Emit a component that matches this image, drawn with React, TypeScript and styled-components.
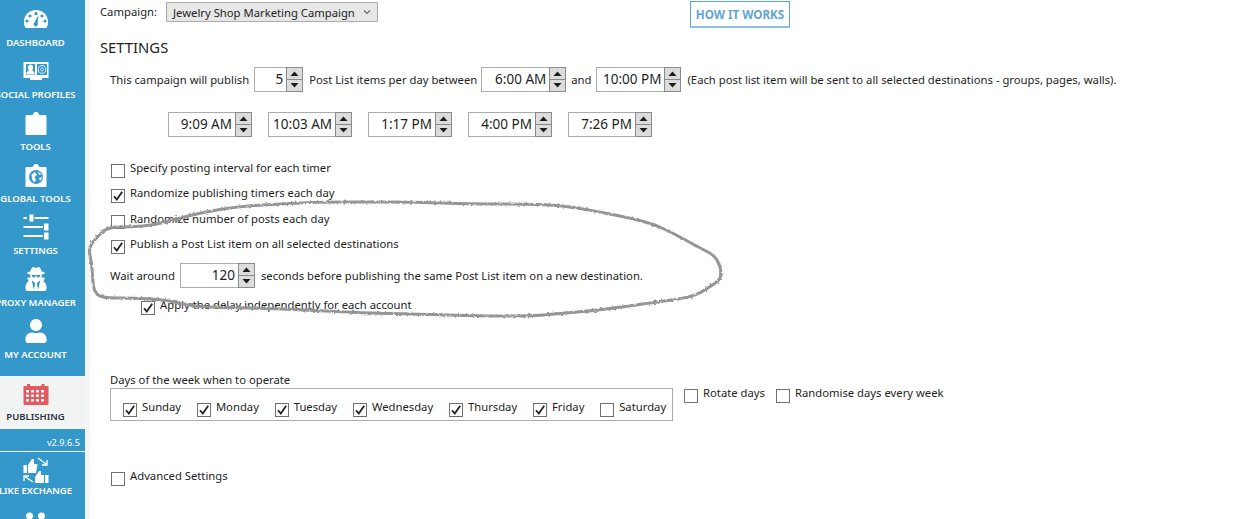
import React from 'react'
import styled, { createGlobalStyle } from 'styled-components'
import { FaUser, FaUserSecret } from 'react-icons/fa'

const Global = createGlobalStyle`
  html, body {
    margin: 0;
    height: 100%;
    background: #ffffff;
    overflow: hidden;
  }
  body {
    font-family: 'Noto Sans', 'Open Sans', sans-serif;
    font-size: 11.27px;
    color: #1e1e1e;
  }
`

const Shell = styled.div`
  position: relative;
  display: flex;
  width: 1248px;
  height: 519px;
  overflow: hidden;
`

const Sidebar = styled.nav`
  flex: none;
  width: 85px;
  height: 519px;
  overflow: hidden;
  background: #3598cb;
  color: #ffffff;
`

const NavItem = styled.div<{ $active?: boolean; $height?: number }>`
  display: flex;
  flex-direction: column;
  align-items: center;
  justify-content: flex-end;
  height: ${(p) => p.$height ?? 52}px;
  padding: 0 14px ${(p) => (p.$active ? 6 : 4)}px 0;
  box-sizing: border-box;
  background: ${(p) => (p.$active ? '#f2f4f4' : 'transparent')};
  color: ${(p) => (p.$active ? '#26323a' : '#ffffff')};
  overflow: hidden;
`

const HeadsItem = styled.div`
  display: flex;
  justify-content: center;
  height: 18px;
  padding: 9px 14px 0 0;
  box-sizing: border-box;
  overflow: hidden;
`

const Spacer = styled.div`
  height: 11px;
`

const NavLabel = styled.span`
  font-size: 9.5px;
  font-weight: 600;
  line-height: 13px;
  white-space: nowrap;
`

const NavIcon = styled.svg<{ $color?: string }>`
  display: block;
  flex: none;
  width: 28px;
  height: 28px;
  margin-bottom: 3px;
  overflow: visible;
  fill: ${(p) => p.$color ?? 'currentColor'};
`

const PackIcon = styled.span`
  display: flex;
  flex: none;
  align-items: center;
  justify-content: center;
  height: 28px;
  margin-bottom: 3px;
  font-size: 24px;
`

const Version = styled.div`
  height: 23px;
  box-sizing: border-box;
  padding: 7px 5px 0 0;
  font-size: 9.2px;
  line-height: 14px;
  text-align: right;
  border-bottom: 1px solid #ffffff;
`

const Gutter = styled.div`
  flex: none;
  width: 5px;
  background: #f4f6f6;
`

const Main = styled.main`
  flex: 1;
  padding-left: 10px;
`

const TopRow = styled.div`
  display: flex;
  align-items: flex-start;
  height: 39px;
`

const CampaignLabel = styled.span`
  width: 66px;
  line-height: 24px;
`

const Select = styled.div`
  display: flex;
  align-items: center;
  justify-content: space-between;
  width: 212px;
  height: 20px;
  margin-top: 2px;
  padding: 0 6px;
  box-sizing: border-box;
  background: #e7e7e7;
  border: 1px solid #acacac;
`

const HowItWorks = styled.div`
  width: 100px;
  height: 27px;
  margin: 1px 0 0 312px;
  box-sizing: border-box;
  border: 1px solid #5aa7d3;
  border-bottom: 2px solid #8cc2e0;
  color: #5ea6d0;
  font-size: 11.6px;
  font-weight: 700;
  line-height: 25px;
  text-align: center;
`

const Heading = styled.h2`
  margin: 0;
  height: 27px;
  font-size: 14.8px;
  font-weight: 400;
  line-height: 16px;
`

const PublishRow = styled.div`
  display: flex;
  align-items: center;
  height: 26px;
  padding-left: 10px;
  white-space: nowrap;
`

const Gap = styled.span<{ $w: number }>`
  display: inline-block;
  flex: none;
  width: ${(p) => p.$w}px;
`

const TimesRow = styled.div`
  display: flex;
  gap: 16px;
  height: 26px;
  margin-top: 20px;
  padding-left: 68px;
`

const SpinBox = styled.div<{ $w: number }>`
  display: flex;
  flex: none;
  width: ${(p) => p.$w}px;
  height: 25px;
  box-sizing: border-box;
  background: #ffffff;
  border: 1px solid #acacac;
`

const SpinValue = styled.span`
  flex: 1;
  padding-right: 3px;
  font-size: 13.5px;
  line-height: 22px;
  text-align: right;
  white-space: nowrap;
`

const SpinButtons = styled.div`
  display: flex;
  flex-direction: column;
  flex: none;
  width: 17px;
  margin: -1px -1px -1px 0;
  box-sizing: border-box;
  border: 1px solid #8a8a8a;
  background: #dcdcdc;
`

const SpinPart = styled.div`
  flex: 1;
  display: flex;
  align-items: center;
  justify-content: center;
  & + & {
    border-top: 1px solid #8a8a8a;
  }
`

const Options = styled.div`
  margin-top: 23px;
  padding-left: 10px;
`

const OptionRow = styled.div<{ $indent?: number }>`
  height: 25.4px;
  padding-left: ${(p) => p.$indent ?? 0}px;
`

const WaitRow = styled.div`
  display: flex;
  align-items: center;
  height: 26px;
  margin-bottom: 9px;
  white-space: nowrap;
`

const Check = styled.label`
  display: inline-flex;
  align-items: flex-start;
  white-space: nowrap;
  line-height: 14px;
`

const Box = styled.span`
  flex: none;
  display: flex;
  align-items: center;
  justify-content: center;
  width: 14px;
  height: 14px;
  margin: 3px 5px 0 1px;
  box-sizing: border-box;
  background: #ffffff;
  border: 1px solid #707070;
`

const DaysBlock = styled.div`
  margin-top: 49.6px;
  padding-left: 10px;
`

const DaysCaption = styled.div`
  height: 15px;
  line-height: 14px;
`

const DaysRow = styled.div`
  display: flex;
  align-items: flex-start;
`

const DaysFrame = styled.div`
  display: flex;
  width: 563px;
  height: 33px;
  box-sizing: border-box;
  padding: 11px 0 0 11px;
  border: 1px solid #acacac;
  gap: 14.8px;
`

const DaysExtras = styled.div`
  display: flex;
  gap: 10px;
  margin: -2px 0 0 10px;
`

const Advanced = styled.div`
  margin-top: 48px;
  padding-left: 10px;
`

const Scribble = styled.svg`
  position: absolute;
  inset: 0;
  pointer-events: none;
`

function CheckBox({ label, checked }: { label: string; checked?: boolean }) {
  return (
    <Check>
      <Box>
        {checked && (
          <svg width="12" height="12" viewBox="0 0 12 12">
            <path d="M2 6.2 L4.8 9.6 L10.2 1.8" fill="none" stroke="#222" strokeWidth="1.8" />
          </svg>
        )}
      </Box>
      {label}
    </Check>
  )
}

function Spin({ value, w }: { value: string; w: number }) {
  return (
    <SpinBox $w={w}>
      <SpinValue>{value}</SpinValue>
      <SpinButtons>
        <SpinPart>
          <svg width="9" height="5" viewBox="0 0 9 5">
            <path d="M0.5 5 L4.5 0.5 L8.5 5 Z" fill="#1c1c1c" />
          </svg>
        </SpinPart>
        <SpinPart>
          <svg width="9" height="5" viewBox="0 0 9 5">
            <path d="M0.5 0 L4.5 4.5 L8.5 0 Z" fill="#1c1c1c" />
          </svg>
        </SpinPart>
      </SpinButtons>
    </SpinBox>
  )
}

const times = ['9:09 AM', '10:03 AM', '1:17 PM', '4:00 PM', '7:26 PM']

const days = [
  { label: 'Sunday', checked: true },
  { label: 'Monday', checked: true },
  { label: 'Tuesday', checked: true },
  { label: 'Wednesday', checked: true },
  { label: 'Thursday', checked: true },
  { label: 'Friday', checked: true },
  { label: 'Saturday', checked: false },
]

// the hand-drawn loop somebody put over the screenshot
const loop: [number, number][] = [
  [108, 227], [130, 227], [155, 225], [180, 218], [205, 212], [235, 207], [262, 205], [315, 202],
  [365, 202], [415, 202], [467, 204], [520, 204], [560, 205], [600, 212], [630, 218], [657, 225],
  [680, 237], [700, 248], [714, 255], [720, 265], [721, 273], [720, 280], [708, 288], [693, 297],
  [650, 303], [600, 310], [565, 313], [533, 316], [480, 316], [415, 314], [362, 313], [310, 310],
  [252, 308], [195, 307], [168, 300], [135, 298], [100, 298], [94, 290], [93, 283], [91.7, 263],
  [88.3, 248], [97, 237],
]

function loopPath(points: [number, number][]) {
  const mid = (a: [number, number], b: [number, number]) => `${(a[0] + b[0]) / 2} ${(a[1] + b[1]) / 2}`
  let d = `M${mid(points[points.length - 1], points[0])}`
  points.forEach((p, i) => {
    d += ` Q${p[0]} ${p[1]} ${mid(p, points[(i + 1) % points.length])}`
  })
  return d
}

export default function App() {
  return (
    <Shell>
      <Global />
      <Sidebar>
        <NavItem $height={53}>
          <NavIcon viewBox="0 0 28 28">
            <path
              fillRule="evenodd"
              d="M14 5 C7 5 2 10 2 17 C2 19.5 2.6 21.5 3.6 23 L24.4 23 C25.4 21.5 26 19.5 26 17 C26 10 21 5 14 5 Z M14 7 a1.6 1.6 0 1 1 -.01 0 Z M8 9.4 a1.6 1.6 0 1 1 -.01 0 Z M20 9.4 a1.6 1.6 0 1 1 -.01 0 Z M5 14.4 a1.6 1.6 0 1 1 -.01 0 Z M23 14.4 a1.6 1.6 0 1 1 -.01 0 Z"
            />
            <path d="M16.5 10 L15.6 18 a2.2 2.2 0 1 1 -3 -.8 Z" fill="#3598cb" />
          </NavIcon>
          <NavLabel>DASHBOARD</NavLabel>
        </NavItem>
        <NavItem>
          <NavIcon viewBox="0 0 28 28">
            <path d="M1.5 5 H26.5 V21 H20 V23 H8 V21 H1.5 Z" />
            <path d="M4 7 H13 V18 H4 Z" fill="#3598cb" />
            <path d="M8.5 7.5 a2.6 2.6 0 0 1 2.6 3 c0 1.6 -.8 2.4 -.8 3.2 l2.2 1.6 V17.5 H4.5 V15.3 L6.7 13.7 c0 -.8 -.8 -1.6 -.8 -3.2 A2.6 2.6 0 0 1 8.5 7.5 Z" />
            <path d="M15 7 H25 V18 H15 Z" fill="#3598cb" />
            <circle cx="20" cy="12.5" r="3.8" fill="none" stroke="#bfe0f0" strokeWidth="1.2" />
            <circle cx="20" cy="12.5" r="1.4" fill="none" stroke="#bfe0f0" strokeWidth="1" />
          </NavIcon>
          <NavLabel>SOCIAL PROFILES</NavLabel>
        </NavItem>
        <NavItem>
          <NavIcon viewBox="0 0 28 28">
            <path d="M4.5 6 H10.5 L12.5 3 H15.5 L17.5 6 H23.5 a1 1 0 0 1 1 1 V25 a1 1 0 0 1 -1 1 H4.5 a1 1 0 0 1 -1 -1 V7 a1 1 0 0 1 1 -1 Z" />
          </NavIcon>
          <NavLabel>TOOLS</NavLabel>
        </NavItem>
        <NavItem>
          <NavIcon viewBox="0 0 28 28">
            <path d="M4.5 6 H10.5 L12.5 3 H15.5 L17.5 6 H23.5 a1 1 0 0 1 1 1 V25 a1 1 0 0 1 -1 1 H4.5 a1 1 0 0 1 -1 -1 V7 a1 1 0 0 1 1 -1 Z" />
            <circle cx="14" cy="16" r="7" fill="#3598cb" />
            <path d="M9.5 13.5 L13 11 L15 14 L12.5 16 L14 19 L12 21.5 L10 18 Z M16 10.5 L19.5 13 L17 14 Z M17 17 L20.5 16 L18 20 Z" />
          </NavIcon>
          <NavLabel>GLOBAL TOOLS</NavLabel>
        </NavItem>
        <NavItem>
          <NavIcon viewBox="0 0 28 28">
            <path d="M1.5 4 H5 V6 H1.5 Z M12.5 4 H26.5 V6 H12.5 Z M7.5 1.5 H11.5 V8.5 H7.5 Z M1.5 13 H21 V15 H1.5 Z M22 10.5 H26.5 V17.5 H22 Z M1.5 22 H21 V24 H1.5 Z M22 19.5 H26.5 V26.5 H22 Z" />
          </NavIcon>
          <NavLabel>SETTINGS</NavLabel>
        </NavItem>
        <NavItem>
          <PackIcon>
            <FaUserSecret />
          </PackIcon>
          <NavLabel>PROXY MANAGER</NavLabel>
        </NavItem>
        <NavItem>
          <PackIcon>
            <FaUser />
          </PackIcon>
          <NavLabel>MY ACCOUNT</NavLabel>
        </NavItem>
        <Spacer />
        <NavItem $active $height={53}>
          <NavIcon viewBox="0 0 28 28" $color="#e05a5f">
            <path
              fillRule="evenodd"
              d="M1.5 7 H5 V5 H8 V7 H19.5 V5 H22.5 V7 H26.5 V25 a1 1 0 0 1 -1 1 H2.5 a1 1 0 0 1 -1 -1 Z M4 11 V13.5 H7 V11 Z M9 11 V13.5 H12 V11 Z M14 11 V13.5 H17 V11 Z M19 11 V13.5 H22 V11 Z M4 15.5 V18 H7 V15.5 Z M9 15.5 V18 H12 V15.5 Z M14 15.5 V18 H17 V15.5 Z M19 15.5 V18 H22 V15.5 Z M4 20 V22.5 H7 V20 Z M9 20 V22.5 H12 V20 Z M14 20 V22.5 H17 V20 Z M19 20 V22.5 H22 V20 Z"
            />
          </NavIcon>
          <NavLabel>PUBLISHING</NavLabel>
        </NavItem>
        <Version>v2.9.6.5</Version>
        <NavItem $height={49}>
          <NavIcon viewBox="0 0 28 28">
            <path d="M1.5 12 H5 V20 H1.5 Z M6 12 L10 6 H12 V11 H15.5 L14 20 H6 Z" />
            <path d="M26.5 30 H23 V22 H26.5 Z M22 30 H13 V24 L17 18 H19 V22 H22 Z" />
            <path d="M16 5 L25 12 M25 7 V12 H20 M11 29 L2 23 M2 28 V23 H7" fill="none" stroke="currentColor" strokeWidth="1.3" />
          </NavIcon>
          <NavLabel>LIKE EXCHANGE</NavLabel>
        </NavItem>
        <HeadsItem>
          <NavIcon viewBox="0 0 28 28">
            <circle cx="7.5" cy="6" r="3.5" />
            <circle cx="19.5" cy="6" r="3.5" />
          </NavIcon>
        </HeadsItem>
      </Sidebar>
      <Gutter />
      <Main>
        <TopRow>
          <CampaignLabel>Campaign:</CampaignLabel>
          <Select>
            Jewelry Shop Marketing Campaign
            <svg width="8" height="5" viewBox="0 0 8 5">
              <path d="M1 0.5 L4 3.5 L7 0.5" fill="none" stroke="#666" strokeWidth="1.1" />
            </svg>
          </Select>
          <HowItWorks>HOW IT WORKS</HowItWorks>
        </TopRow>
        <Heading>SETTINGS</Heading>
        <PublishRow>
          This campaign will publish
          <Gap $w={5} />
          <Spin value="5" w={49} />
          <Gap $w={6} />
          Post List items per day between
          <Gap $w={4} />
          <Spin value="6:00 AM" w={85} />
          <Gap $w={5} />
          and
          <Gap $w={5} />
          <Spin value="10:00 PM" w={85} />
          <Gap $w={6} />
          (Each post list item will be sent to all selected destinations - groups, pages, walls).
        </PublishRow>
        <TimesRow>
          {times.map((t) => (
            <Spin key={t} value={t} w={84} />
          ))}
        </TimesRow>
        <Options>
          <OptionRow>
            <CheckBox label="Specify posting interval for each timer" />
          </OptionRow>
          <OptionRow>
            <CheckBox label="Randomize publishing timers each day" checked />
          </OptionRow>
          <OptionRow>
            <CheckBox label="Randomize number of posts each day" />
          </OptionRow>
          <OptionRow>
            <CheckBox label="Publish a Post List item on all selected destinations" checked />
          </OptionRow>
          <WaitRow>
            Wait around
            <Gap $w={5} />
            <Spin value="120" w={75} />
            <Gap $w={6} />
            seconds before publishing the same Post List item on a new destination.
          </WaitRow>
          <OptionRow $indent={30}>
            <CheckBox label="Apply the delay independently for each account" checked />
          </OptionRow>
        </Options>
        <DaysBlock>
          <DaysCaption>Days of the week when to operate</DaysCaption>
          <DaysRow>
            <DaysFrame>
              {days.map((d) => (
                <CheckBox key={d.label} label={d.label} checked={d.checked} />
              ))}
            </DaysFrame>
            <DaysExtras>
              <CheckBox label="Rotate days" />
              <CheckBox label="Randomise days every week" />
            </DaysExtras>
          </DaysRow>
        </DaysBlock>
        <Advanced>
          <CheckBox label="Advanced Settings" />
        </Advanced>
      </Main>
      <Scribble width="1248" height="519" viewBox="0 0 1248 519">
        <filter id="rough" x="-5%" y="-5%" width="110%" height="110%">
          <feTurbulence type="fractalNoise" baseFrequency="0.35" numOctaves="2" seed="4" />
          <feDisplacementMap in="SourceGraphic" scale="3" />
        </filter>
        <path d={loopPath(loop)} fill="none" stroke="#959595" strokeWidth="3" filter="url(#rough)" />
      </Scribble>
    </Shell>
  )
}
